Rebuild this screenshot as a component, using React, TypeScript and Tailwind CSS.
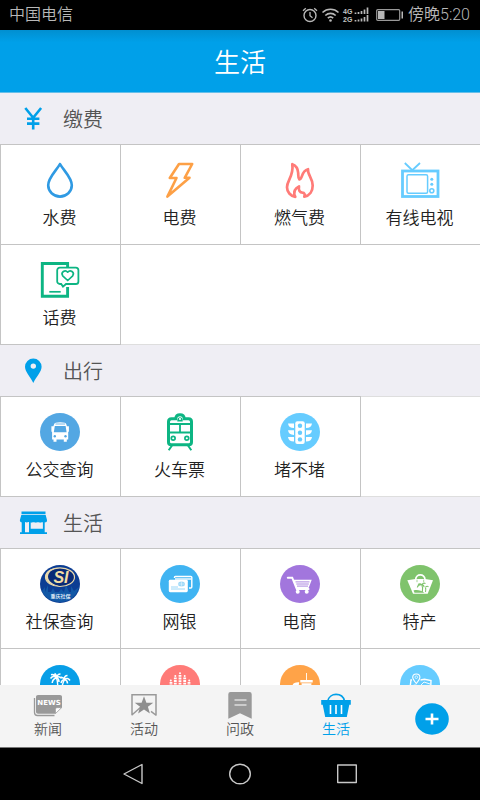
import type { ReactNode } from 'react';

import clsx from 'clsx';

type Service = { name: string; icon: ReactNode; iconOnly?: boolean };
type Group = { title: string; icon: ReactNode; services: Service[] };

const Glyph = ({ children }: { children: ReactNode }) => (
    <svg aria-hidden="true" viewBox="0 0 40 38" className="h-[38px] w-10" fill="none">
        {children}
    </svg>
);

const Disc = ({ color, children }: { color: string; children: ReactNode }) => (
    <Glyph>
        <ellipse cx="20" cy="19" rx="20" ry="19" fill={color} />
        {children}
    </Glyph>
);

const WaterIcon = (
    <Glyph>
        <path
            d="M20 3C16.5 9.5 8.2 16.5 8.2 24.3a11.8 11.3 0 0 0 23.6 0C31.8 16.5 23.5 9.5 20 3Z"
            stroke="#2f9ae3"
            strokeWidth="2.6"
            strokeLinejoin="round"
        />
    </Glyph>
);

const PowerIcon = (
    <Glyph>
        <path
            d="M19 3h13.2L24.7 16.8h4.8L7.4 35.6 16.5 17H9.8Z"
            stroke="#fda046"
            strokeWidth="2.6"
            strokeLinejoin="round"
        />
    </Glyph>
);

const GasIcon = (
    <Glyph>
        <path
            d="M15.3 35.8C10.5 35 7 31 7 26.2c0-7 7-11.4 5.3-23 3.3 1.2 5.7 4.8 5.9 8.8.1 2.5-.2 4.8 1.2 6.5 3.6-.7 1.5-8.5 8.6-10.3-.8 5.3 4.7 8.8 4.7 16.3 0 6-3.2 10.4-8.4 11.2 1-2.5 0-4-1.8-4-2.5-.1-4.3-2.3-3.5-6.3-3.7 1.6-6.2 5.6-3.7 10.4Z"
            stroke="#ff7b78"
            strokeWidth="2.7"
            strokeLinejoin="round"
        />
    </Glyph>
);

const TvIcon = (
    <Glyph>
        <g stroke="#66ccff">
            <path d="M4.8 2l7.5 7.2L20 2" strokeWidth="1.8" />
            <rect x="2.5" y="10" width="35.5" height="25.5" strokeWidth="2.8" />
            <rect x="7" y="13.7" width="20.6" height="18.6" rx="1.5" strokeWidth="1.5" />
            <circle cx="31.8" cy="29.8" r="2" strokeWidth="1.6" />
        </g>
        <circle cx="31.8" cy="18.2" r="1.5" fill="#66ccff" />
        <circle cx="31.8" cy="23.2" r="1.5" fill="#66ccff" />
    </Glyph>
);

const PhoneIcon = (
    <Glyph>
        <g stroke="#0db583">
            <path d="M27.6 6V2.5H2.3v32.8h25.3V26" strokeWidth="2.9" />
            <path
                d="M19.8 6.6h16a2.6 2.6 0 0 1 2.6 2.6v11.2a2.6 2.6 0 0 1-2.6 2.6H26l-3 2.6-1.8-2.6h-1.4a2.6 2.6 0 0 1-2.6-2.6V9.2a2.6 2.6 0 0 1 2.6-2.6Z"
                strokeWidth="1.8"
            />
            <path
                d="m27.7 19.5-5-4.7c-2.3-3.4 2.4-6.7 5-3.6 2.6-3.1 7.3.2 5 3.6Z"
                strokeWidth="1.7"
                strokeLinejoin="round"
            />
            <path d="M9.3 30.8h11.4" strokeWidth="1.7" />
        </g>
    </Glyph>
);

const BusIcon = (
    <Disc color="#53a7e3">
        <path
            d="M14 11.5c0-1.6 2.5-2.3 6.2-2.3s6.2.7 6.2 2.3l.5 1.8h2v5.5h-.7v7.7h-1.4v2.3h-3v-2.3h-7.3v2.3h-3v-2.3h-1.4v-7.7h-.7v-5.5h2Z"
            fill="#fff"
        />
        <path d="M15.5 11H25" stroke="#53a7e3" strokeWidth=".8" />
        <path d="M14.8 13h10.8l1 6.2H13.8Z" fill="#53a7e3" />
        <circle cx="14.8" cy="23.2" r="1.2" fill="#53a7e3" />
        <circle cx="25.5" cy="23.2" r="1.2" fill="#53a7e3" />
    </Disc>
);

const TrainIcon = (
    <Glyph>
        <g stroke="#0db583">
            <path
                d="M11.5 5.7h4.2c.5-5.3 8.1-5.3 8.6 0h4.2c2 0 3 1.5 3 3V29c0 1.8-1 2.8-2.7 2.8H11.2c-1.7 0-2.7-1-2.7-2.8V8.7c0-1.5 1-3 3-3Z"
                strokeWidth="3"
            />
            <path d="M8 11h24M8 19.5h24" strokeWidth="1.8" />
            <path d="M20 11v8.5" strokeWidth="1.8" />
            <circle cx="13.2" cy="25.3" r="1.9" strokeWidth="1.7" />
            <circle cx="26.8" cy="25.3" r="1.9" strokeWidth="1.7" />
            <path d="m12 32.5-3.3 4.7M28 32.5l3.3 4.7" strokeWidth="2" />
        </g>
        <path d="M17.3 8.5V6.8c0-3.5 5.4-3.5 5.4 0v1.7Z" fill="#0db583" />
        <circle cx="20" cy="6" r="1.1" fill="#fff" />
    </Glyph>
);

const TrafficIcon = (
    <Disc color="#66ccff">
        <rect x="15.3" y="8.3" width="9.4" height="22.8" rx="2" fill="#fff" />
        <path
            d="M14 10.500v4.600c-3.600 0-5.600-1.500-6-4.600ZM14 17.300v4.600c-3.600 0-5.600-1.500-6-4.600ZM14 24v4.600c-3.600 0-5.600-1.500-6-4.600ZM26 10.500v4.600c3.600 0 5.600-1.500 6-4.600ZM26 17.300v4.600c3.600 0 5.600-1.500 6-4.600ZM26 24v4.600c3.600 0 5.600-1.500 6-4.600Z"
            fill="#fff"
        />
        <circle cx="20" cy="12.8" r="2.2" fill="#66ccff" />
        <circle cx="20" cy="19.7" r="2.2" fill="#66ccff" />
        <circle cx="20" cy="26.4" r="2.2" fill="#66ccff" />
    </Disc>
);

const SocialIcon = (
    <Disc color="#0c3d93">
        <path
            d="M2 26l3-4v5l3-7v7h3l2-4 2 4h4l2-3 3 3 2-7 3 7h2v-6l3 5 5-4-2 5c-3 6-9 10-17 10S5 33 2 26Z"
            fill="#1258a6"
        />
        <ellipse cx="20" cy="12.2" rx="14.5" ry="9.3" fill="#082a76" stroke="#ead9ab" strokeWidth="1.2" />
        <path
            d="M5.600 10c1-4.500 7-7.600 14.400-7.600-7 1-11.500 4-12 9.200 0 4.500 5 8.200 12 9.800C11 21 4.600 16.500 5.600 10Z"
            fill="#ead9ab"
        />
        <text
            x="21"
            y="18"
            textAnchor="middle"
            fill="#f3dda4"
            className="font-['Liberation_Sans',sans-serif] text-[16px] font-bold italic"
        >
            SI
        </text>
        <text
            x="20.5"
            y="33"
            textAnchor="middle"
            fill="#dfe8f5"
            className="font-['Noto_Sans_CJK_SC',sans-serif] text-[5px] font-bold"
        >
            重庆社保
        </text>
    </Disc>
);

const BankIcon = (
    <Disc color="#40b4f2">
        <path
            d="M14.5 13v-.7c0-.5.4-.8.8-.8h15.500c.6 0 1 .3 1 .8V22c0 .6-.4 1-1 1H29"
            stroke="#fff"
            strokeWidth="1.4"
        />
        <path d="M15 14h16" stroke="#fff" strokeWidth="1.4" />
        <rect x="8.8" y="14.8" width="19" height="12.4" rx="1.4" fill="#fff" />
        <path d="M11 22h7M11 24h14" stroke="#9bd8f8" strokeWidth="1" />
        <ellipse cx="21.5" cy="19" rx="3.5" ry="2.5" fill="#9bd8f8" />
        <path d="M18 19h7M21.5 16.5v5" stroke="#fff" strokeWidth=".4" />
    </Disc>
);

const CartIcon = (
    <Disc color="#a276dd">
        <path d="M7.8 12.700h4.400L16.800 24h11.700" stroke="#fff" strokeWidth="2" strokeLinecap="round" />
        <path d="M13.300 14.800h18.400l-3.200 8.500H16.500Z" fill="#fff" />
        <path d="M15.500 16.900h14M16.300 19h12.500M17 21.100h11" stroke="#a276dd" strokeWidth=".9" />
        <circle cx="17.7" cy="26.8" r="2" fill="#fff" />
        <circle cx="26.7" cy="26.8" r="2" fill="#fff" />
    </Disc>
);

const BagIcon = (
    <Disc color="#7fc36c">
        <path d="m7.3 15.200 8-1.200h10l7.700 1.300-5.300 13.400H13Z" fill="#fff" />
        <path d="M15.700 17v-2.300c0-6.400 9.300-6.400 9.300 0V17" stroke="#fff" strokeWidth="1.700" />
        <path d="M17 17.200v-2.500M23.700 17.200v-2.500" stroke="#7fc36c" strokeWidth=".7" />
        <path d="M13.500 25.500c4-1 7.500 0 11 2.200h-10Z" fill="#7fc36c" />
        <path
            d="M22.300 27c.7-2.500.5-5-.5-7.300M17.300 22.500c.5-2.200 2-3 4.500-2.800M18 19.500c1.300-1 2.800-.8 3.800.2M22 19.700c.7-1.500 2-1.800 3.500-1.200M22 19.700c1.300 0 2 .9 2 2.500M25.500 27c.5-2 .5-3 0-4.500M25.500 22.200c1-1.200 2-1.200 3-.5"
            stroke="#7fc36c"
            strokeWidth="1.1"
        />
    </Disc>
);

const PalmIcon = (
    <Disc color="#079ee7">
        <path
            d="M16.500 13c-2-2-4-2-6 .5M16.500 13c-1.500-3.300-3-3.800-5.500-3.300M16.500 13c0-2.500-.5-3.800-2-4.500M16.500 13c.5-3 2-4 4-4M16.500 13c2-1.800 4-1.300 5 .5M16.500 13c-2.500.5-4 2-4.300 5M16.500 13c2 .5 2.500 2 2.500 4M24.500 14.500c-.5-2.500 1-4 3-4M24.500 14.500c-1-2-2-2.500-3.500-2.300M24.500 14.500c2-1.500 4-1.300 5.500 1M24.500 14.500c2 .5 3 2 3 4M24.500 14.500c-2 .3-3 1.500-3.500 3.500"
            stroke="#fff"
            strokeWidth="1.5"
        />
        <path d="M16.500 13c1.500 4 1.500 9 0 14M24.500 14.500c-2 4-3 8-3 12.500M10 28h20" stroke="#fff" strokeWidth="1.4" />
    </Disc>
);

const CityIcon = (
    <Disc color="#ff7b78">
        <path
            d="M20 10v20M15.300 12.500V30M24.700 12.500V30M11 17v13M29 17v13"
            stroke="#fff"
            strokeWidth="2.8"
            strokeDasharray="1.8 .8"
        />
        <circle cx="20" cy="8.3" r="1" fill="#fff" />
        <circle cx="15.3" cy="11" r="1" fill="#fff" />
        <circle cx="24.7" cy="11" r="1" fill="#fff" />
        <circle cx="10.8" cy="15.5" r="1" fill="#fff" />
        <circle cx="29.2" cy="15.5" r="1" fill="#fff" />
    </Disc>
);

const FoodIcon = (
    <Disc color="#ffa348">
        <path d="M26.500 8v7" stroke="#fff" strokeWidth=".9" />
        <path d="M20.300 15h12.400v2.400H20.300ZM21.500 18.300h10L30.300 30h-7.600Z" fill="#fff" />
        <path d="M12.500 20.500c.3-2.200 2.800-3.500 6.700-3.200l-.5 3.200ZM11 22h9v6h-9Z" fill="#fff" />
    </Disc>
);

const MapIcon = (
    <Disc color="#66ccff">
        <path
            d="M16.300 18.500c-2.500-3-3.600-4.400-3.600-6.200 0-4.500 7.200-4.500 7.200 0 0 1.800-1.100 3.200-3.600 6.200Z"
            stroke="#fff"
            strokeWidth="1.1"
        />
        <circle cx="16.3" cy="12.2" r="1.3" stroke="#fff" strokeWidth=".7" />
        <path d="M12 15h-1L9.500 27l7 2 7-2 7 1.500.5-13-6.500-1.200-4 .7" stroke="#fff" strokeWidth="1.4" />
        <path d="m11 21 4-1 5 1 4-4 6 2" stroke="#fff" strokeWidth=".9" />
    </Disc>
);

const GroupIcon = ({ children }: { children: ReactNode }) => (
    <svg aria-hidden="true" viewBox="0 0 28 26" className="h-[26px] w-7" fill="none">
        {children}
    </svg>
);

const GROUPS: Group[] = [
    {
        title: '缴费',
        icon: (
            <GroupIcon>
                <path
                    d="m6.3 2 7.900 9.700L22.100 2M14.200 11.500v12M8 12.800h12.400M8 17.600h12.400"
                    stroke="#00a0e9"
                    strokeWidth="2.600"
                />
            </GroupIcon>
        ),
        services: [
            { name: '水费', icon: WaterIcon },
            { name: '电费', icon: PowerIcon },
            { name: '燃气费', icon: GasIcon },
            { name: '有线电视', icon: TvIcon },
            { name: '话费', icon: PhoneIcon },
        ],
    },
    {
        title: '出行',
        icon: (
            <GroupIcon>
                <path
                    fillRule="evenodd"
                    d="M14.300 25C11 18.500 6 13.700 6 8.800a8.300 8.300 0 0 1 16.600 0c0 4.900-5 9.700-8.300 16.200Zm0-14.200a2.700 2.700 0 1 0 0-5.400 2.700 2.700 0 0 0 0 5.400Z"
                    fill="#00a0e9"
                />
            </GroupIcon>
        ),
        services: [
            { name: '公交查询', icon: BusIcon },
            { name: '火车票', icon: TrainIcon },
            { name: '堵不堵', icon: TrafficIcon },
        ],
    },
    {
        title: '生活',
        icon: (
            <GroupIcon>
                <path
                    fillRule="evenodd"
                    d="M2.500 1.500h24v2.700h-24ZM2.300 5h24.400l1.300 5c0 1.500-1.300 2.200-2.300 1.500v10.700H28V24H1v-1.800h1.700V11.500C1.500 12 .7 11 .9 10ZM6 12v10.200h4V12Zm5.700.3v6.500h12.200v-6.500Z"
                    fill="#00a0e9"
                />
                <path
                    d="M1 10.300a2 2 0 0 0 4.500 0 2 2 0 0 0 4.500 0 2 2 0 0 0 4.500 0 2 2 0 0 0 4.500 0 2 2 0 0 0 4.500 0 2 2 0 0 0 4.500 0Z"
                    fill="#00a0e9"
                />
            </GroupIcon>
        ),
        services: [
            { name: '社保查询', icon: SocialIcon },
            { name: '网银', icon: BankIcon },
            { name: '电商', icon: CartIcon },
            { name: '特产', icon: BagIcon },
            { name: '旅游', icon: PalmIcon, iconOnly: true },
            { name: '城市', icon: CityIcon, iconOnly: true },
            { name: '美食', icon: FoodIcon, iconOnly: true },
            { name: '地图', icon: MapIcon, iconOnly: true },
        ],
    },
];

const TabIcon = ({ children }: { children: ReactNode }) => (
    <svg aria-hidden="true" viewBox="0 0 32 28" className="h-7 w-8" fill="none">
        {children}
    </svg>
);

const TABS = [
    {
        name: '新闻',
        icon: (
            <TabIcon>
                <path d="M2.500 7v14.500c0 2 1 3 3 3h17" stroke="#999" strokeWidth="1.300" />
                <path
                    d="M6 4h22c1.200 0 2 .8 2 2v10.500L23.500 22.800H6c-1.200 0-2-.8-2-2V6c0-1.200.8-2 2-2Z"
                    fill="#999"
                />
                <path
                    d="M23.500 22.500v-4c0-1.200.6-1.800 1.800-1.800h4.200Z"
                    fill="#fff"
                    stroke="#999"
                    strokeWidth=".6"
                />
                <text
                    x="17"
                    y="14"
                    textAnchor="middle"
                    fill="#fff"
                    className="font-['DejaVu_Sans',sans-serif] text-[7px] font-bold"
                >
                    NEWS
                </text>
            </TabIcon>
        ),
    },
    {
        name: '活动',
        icon: (
            <TabIcon>
                <path d="M4 23.800V3.700h24v20.800M3.600 24.200l9.900-8.700M28.400 24.500 23 20.300" stroke="#999" strokeWidth="1.500" />
                <path
                    d="m16 5.200 2.400 6.500h6.900l-5.400 4.100 2 6.800-5.900-4-5.900 4 2-6.800-5.400-4.100h6.900Z"
                    fill="#8f8f8f"
                />
            </TabIcon>
        ),
    },
    {
        name: '问政',
        icon: (
            <TabIcon>
                <path
                    d="M6.500 1h19A2.200 2.200 0 0 1 27.700 3.200v24.600L16 22.200 4.300 27.800V3.200A2.200 2.200 0 0 1 6.500 1Z"
                    fill="#999"
                />
                <path d="M10.500 9h12M10.500 14h12" stroke="#fff" strokeWidth="1.2" />
            </TabIcon>
        ),
    },
    {
        name: '生活',
        active: true,
        icon: (
            <TabIcon>
                <path d="M7.800 10C9.500 1.200 22.500 1.200 24.500 10" stroke="#00a0e9" strokeWidth="1.6" />
                <path d="M1.200 9h29.600v4.800h-1.500L26.800 26H5.200L2.700 13.800H1.200Z" fill="#00a0e9" />
                <path d="M10.500 14v9M16 14v9M21.500 14v9" stroke="#fff" strokeWidth="1.6" />
            </TabIcon>
        ),
    },
];

const StatusBar = () => (
    <div className="flex h-[30px] shrink-0 items-center justify-between bg-black pr-2.5 pl-[9px] font-['Roboto','Noto_Sans_CJK_SC',sans-serif] text-base leading-none font-[350] text-[#b8b8b8]">
        <span>中国电信</span>
        <div className="flex items-center">
            <svg aria-hidden="true" viewBox="0 0 68 16" className="h-4 w-[68px]" fill="none" stroke="#b8b8b8">
                <circle cx="8" cy="8.5" r="6" strokeWidth="1.4" />
                <path d="M8 5v3.800l2.500 2" strokeWidth="1.3" />
                <path d="M1 3.800 3.800 1.300M15 3.800l-2.800-2.500" strokeWidth="1.3" />
                <path
                    d="M20.500 5.500c4.500-4.300 11.500-4.300 16 0M23.300 8.500c3-2.900 7.400-2.900 10.400 0M25.800 11.200c1.600-1.500 3.800-1.500 5.400 0"
                    strokeWidth="1.6"
                />
                <circle cx="28.5" cy="13.5" r="1.3" fill="#b8b8b8" stroke="none" />
                <g stroke="none" fill="#c4c4c4" className="font-['Liberation_Sans',sans-serif] text-[7px] font-bold">
                    <text x="41" y="7">
                        4G
                    </text>
                    <text x="41" y="14.5">
                        2G
                    </text>
                </g>
                <path
                    d="M53.500 7V5.500M56.500 7V5M59.500 7V4M62.500 7V2.500M65.500 7V.5M53.500 14.500V13M56.500 14.500v-2M59.500 14.500v-3M62.500 14.500V10M65.500 14.500V8"
                    strokeWidth="1.7"
                />
            </svg>
            <svg aria-hidden="true" viewBox="0 0 28 12" className="ml-1.5 h-3 w-7" fill="none">
                <rect x=".7" y=".7" width="23" height="10.6" rx="1" stroke="#999" strokeWidth="1.2" />
                <path d="M2 2h6.500v8H2ZM25.500 2.500H27v7h-1.500Z" fill="#b8b8b8" />
            </svg>
            <span className="ml-1">傍晚5:20</span>
        </div>
    </div>
);

const ServiceGroup = ({ title, icon, services }: Group) => (
    <section>
        <div className="flex h-[51px] items-center gap-4 bg-[#efeef4] pl-[19px]">
            {icon}
            <h2 className="text-xl leading-none font-[350] text-[#555]">{title}</h2>
        </div>
        {/* neighbouring cells overlap by one pixel so that they share a border */}
        <div className="grid auto-rows-[100px] grid-cols-4 border-t border-[#dedede] bg-white shadow-[inset_0_-1px_0_#dedede]">
            {services.map(({ name, icon: image, iconOnly }) => (
                <button
                    key={name}
                    type="button"
                    aria-label={name}
                    className="-mt-px -mr-px flex flex-col items-center border border-[#c4c4c4] pt-4 pr-0.5"
                >
                    {image}
                    {!iconOnly && (
                        <span className="mt-1.5 text-[17px] leading-6 font-[350] text-[#222]">{name}</span>
                    )}
                </button>
            ))}
        </div>
    </section>
);

const TabBar = () => (
    <nav className="grid h-[62px] shrink-0 grid-cols-5 bg-[#f4f4f4]">
        {TABS.map(({ name, icon, active }) => (
            <button
                key={name}
                type="button"
                className={clsx(
                    'flex flex-col items-center pt-1.5 text-[14px] leading-[18px] font-[350]',
                    active ? 'text-[#00a0e9]' : 'text-[#555]'
                )}
            >
                {icon}
                {name}
            </button>
        ))}
        <button type="button" aria-label="添加" className="flex items-center justify-center pt-1.5">
            <svg aria-hidden="true" viewBox="0 0 34 32" className="h-8 w-[34px]">
                <ellipse cx="17" cy="16" rx="16.8" ry="15.7" fill="#00a0e9" />
                <path d="M10.500 16h13M17 10.500v11" stroke="#fff" strokeWidth="2.6" />
            </svg>
        </button>
    </nav>
);

const SYSTEM_KEYS = [
    { name: '返回', shape: <path d="M21 1.500v19L3 11Z" /> },
    { name: '主屏幕', shape: <ellipse cx="12" cy="11" rx="10.3" ry="9.8" /> },
    { name: '最近任务', shape: <rect x="2.7" y="2" width="18.6" height="17.5" /> },
];

const SystemBar = () => (
    <div className="flex h-[53px] shrink-0 justify-center border-t border-[#777] bg-black">
        {SYSTEM_KEYS.map(({ name, shape }) => (
            <button key={name} type="button" aria-label={name} className="flex w-[107px] items-center justify-center">
                <svg
                    aria-hidden="true"
                    viewBox="0 0 24 22"
                    className="h-[22px] w-6"
                    fill="none"
                    stroke="#c8c8c8"
                    strokeWidth="1.4"
                    strokeLinejoin="round"
                >
                    {shape}
                </svg>
            </button>
        ))}
    </div>
);

const App = () => (
    <div className="flex h-screen flex-col overflow-hidden bg-white font-['Noto_Sans_CJK_SC',sans-serif]">
        <StatusBar />
        <header className="flex h-[63px] shrink-0 items-center justify-center border-b border-[#66bfe9] bg-[#00a0e9] bg-linear-to-b from-[#018fd0] to-[#00a0e9] to-20%">
            <h1 className="text-[26px] leading-none font-[350] text-white">生活</h1>
        </header>
        <main className="min-h-0 flex-1 overflow-x-hidden overflow-y-auto [scrollbar-width:none]">
            {GROUPS.map(group => (
                <ServiceGroup key={group.title} {...group} />
            ))}
        </main>
        <TabBar />
        <SystemBar />
    </div>
);

export default App;
